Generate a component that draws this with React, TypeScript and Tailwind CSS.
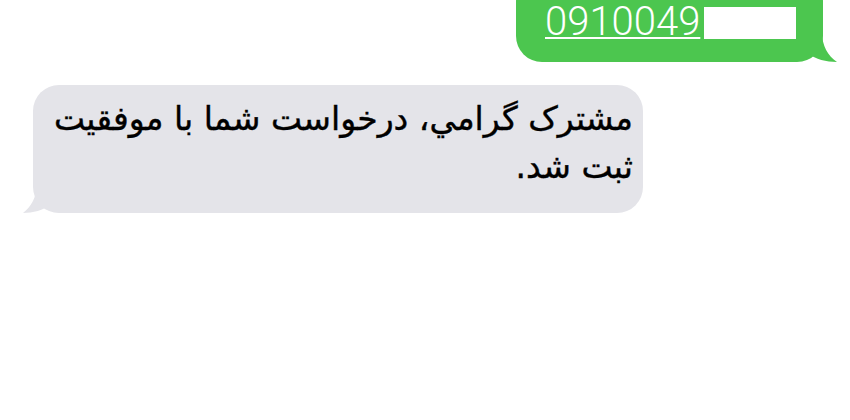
import React from 'react';

function GreenTail() {
  return (
    <svg className="absolute right-[-15px] bottom-0" width="30" height="30" viewBox="0 0 30 30">
      <path d="M0 0 L14 0 C14 14 20 24 29 30 C18 30 8 27 0 22 Z" fill="#4cc64f" />
    </svg>
  );
}

function GrayTail() {
  return (
    <svg className="absolute left-[-12px] bottom-0" width="30" height="30" viewBox="0 0 30 30">
      <path d="M30 0 L16 0 C16 14 10 24 2 30 C12 30 22 27 30 22 Z" fill="#e4e4e9" />
    </svg>
  );
}

export default function App() {
  return (
    <div className="w-[850px] h-[420px] bg-white overflow-hidden flex flex-col">
      <div className="relative self-end mr-[27px] -mt-[24px] w-[307px] h-[86px] rounded-[26px] bg-[#4cc64f] flex items-end pl-[29px] pb-[20px]">
        <GreenTail />
        <span
          className="text-white text-[40px] leading-[40px] font-light underline underline-offset-[2px] decoration-[2px]"
          style={{ fontFamily: 'Roboto, "Liberation Sans", sans-serif' }}
        >
          0910049
        </span>
        <span className="inline-block w-[92px] h-[32px] bg-white ml-[4px] mb-[3px]" />
      </div>

      <div className="relative self-start ml-[33px] mt-[23px] w-[610px] h-[128px] rounded-[26px] bg-[#e4e4e9] pr-[10px] pl-[10px] pt-[10px]">
        <GrayTail />
        <p
          dir="rtl"
          className="text-[33px] leading-[48px] text-black font-medium [-webkit-text-stroke:0.4px_black]"
          style={{ fontFamily: '"DejaVu Sans", sans-serif' }}
        >
          مشترک گرامي، درخواست شما با موفقيت ثبت شد.
        </p>
      </div>
    </div>
  );
}
